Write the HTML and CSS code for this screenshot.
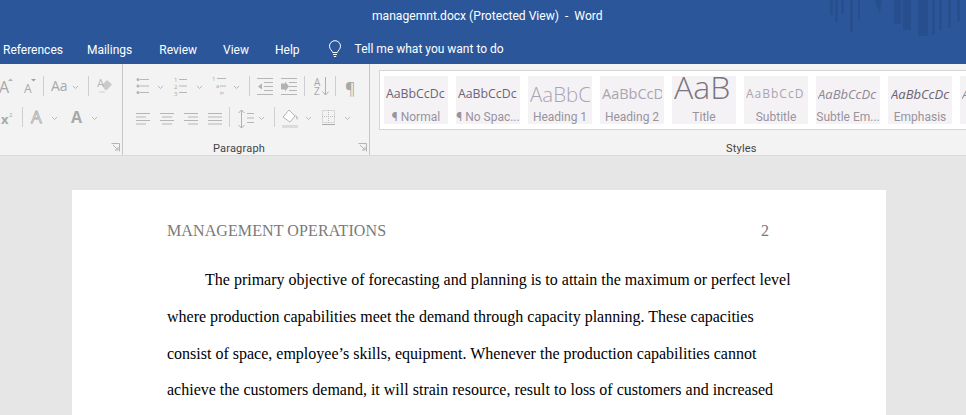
FILE: index.html
```html
<!DOCTYPE html>
<html lang="en">
<head>
<meta charset="utf-8">
<title>managemnt.docx (Protected View) - Word</title>
<link rel="stylesheet" href="styles.css">
</head>
<body>
<div class="app">
  <header class="chrome">
    <svg class="art" width="136" height="36" viewBox="0 0 136 36" aria-hidden="true">
      <g fill="#274f8d">
        <rect x="0" y="0" width="3" height="15"/><rect x="5" y="0" width="3" height="22"/><rect x="11" y="0" width="3" height="14"/><rect x="20" y="0" width="3" height="32"/><rect x="28" y="0" width="2" height="20"/>
        <polygon points="44,0 52,0 50,13"/>
        <rect x="64" y="0" width="7" height="24"/><rect x="73" y="0" width="8" height="30"/><rect x="88" y="0" width="10" height="36"/><rect x="102" y="0" width="3" height="35"/><rect x="109" y="0" width="3" height="30"/><rect x="118" y="0" width="3" height="28"/><rect x="127" y="0" width="3" height="22"/>
      </g>
    </svg>
    <div class="titlebar">managemnt.docx (Protected View)&nbsp; -&nbsp; Word</div>
    <nav class="tabs">
      <span class="tab tab-references">References</span>
      <span class="tab tab-mailings">Mailings</span>
      <span class="tab tab-review">Review</span>
      <span class="tab tab-view">View</span>
      <span class="tab tab-help">Help</span>
      <svg class="bulb" width="14" height="18" viewBox="0 0 14 18" aria-hidden="true">
        <path d="M4.600 12.500C4.400 10.600 1.500 9.400 1.500 6.200a5.500 5.500 0 0 1 11 0c0 3.200-2.900 4.400-3.100 6.300z" fill="none" stroke="#fff" stroke-width="1"/>
        <path d="M5 14.500h4M5.800 16.500h2.400" stroke="#fff" stroke-width="1"/>
      </svg>
      <span class="tell">Tell me what you want to do</span>
    </nav>
  </header>

  <section class="ribbon">
    <div class="group group-font">
      <svg class="tools" width="122" height="68" viewBox="0 0 122 68" aria-hidden="true">
        <g class="glyphs">
          <text x="-1" y="29" font-size="16">A</text>
          <path d="M8 17l2.500-2.500L13 17z" fill="#b4b4b4"/>
          <text x="24" y="29" font-size="12">A</text>
          <path d="M31 15h5l-2.500 2.500z" fill="#a0a0a0"/>
          <text x="51" y="27" font-size="14">Aa</text>
          <text x="1" y="60" font-size="13" font-weight="700">x</text>
          <text x="9" y="53" font-size="6">2</text>
          <text x="31" y="59" font-size="17" class="outline">A</text>
          <text x="71" y="59" font-size="16" font-weight="700">A</text>
        </g>
        <g class="seps"><path d="M43.500 12v20M88.500 12v20M22.500 43v20"/></g>
        <g class="chev"><path d="M73 22l2.500 2.500L78 22M52 53l2.500 2.500L57 53M92 53l2.500 2.500L97 53"/></g>
        <g>
          <path d="M102 21l5-5 5 4.500-5 5.500h-2z" fill="#cdc8cc"/>
          <text x="97" y="23" font-size="11" fill="#b8b8b8">A</text>
          <path d="M99 28h6" stroke="#d0d0d0"/>
        </g>
      </svg>
      <svg class="launcher" width="9" height="9" viewBox="0 0 9 9" aria-hidden="true"><path d="M.5.500h8v8M2 2l5 5M4 7h3V4" fill="none" stroke="#b4b4b4"/></svg>
    </div>

    <div class="group group-para">
      <svg class="tools" width="246" height="68" viewBox="0 0 246 68" aria-hidden="true">
        <g class="lines">
          <path d="M17 15.500h9M17 22h9M17 28.500h9"/>
          <path d="M56 15.500h8M56 22h8M56 28.500h8"/>
          <path d="M94 14.500h9M97 22h6M98 29h3"/>
          <path d="M13 49.500h14M13 53h10M13 56.500h14M13 60h10"/>
          <path d="M37 49.500h14M39 53h10M37 56.500h14M39 60h10"/>
          <path d="M61 49.500h14M65 53h10M61 56.500h14M65 60h10"/>
          <path d="M85 49.500h14M85 53h14M85 56.500h14M85 60h14"/>
          <path d="M124 49.500h7M124 54h7M124 58.500h7"/>
          <path d="M134 14.500h16M141 18.500h9M141 22.500h9M141 26.500h9M134 30.500h16"/>
          <path d="M158 14.500h16M166 18.500h8M166 22.500h8M166 26.500h8M158 30.500h16"/>
        </g>
        <g fill="#b3b3b3">
          <circle cx="15" cy="15.500" r="1.500"/><circle cx="15" cy="22" r="1.500"/><circle cx="15" cy="28.500" r="1.500"/>
          <path d="M135 22.500l4-3v6zM158 19.500h4v-2l4 5-4 5v-2h-4z"/>
        </g>
        <g class="minitext" font-size="6">
          <text x="51" y="18">1</text><text x="51" y="25">2</text><text x="51" y="32">3</text>
          <text x="89" y="17">1</text><text x="93" y="24">a</text><text x="97" y="31">i</text>
        </g>
        <g class="glyphs">
          <text x="191" y="22" font-size="10">A</text>
          <text x="191" y="31" font-size="10">Z</text>
          <text x="222" y="30" font-size="16">¶</text>
        </g>
        <path class="arrow" d="M202.500 13v18M199.500 27.500l3 3.500 3-3.500"/>
        <path class="arrow" d="M118.500 46v18M115.500 49l3-3 3 3M115.500 61l3 3 3-3"/>
        <g class="seps"><path d="M126.500 12v20M181.500 12v20M212.500 12v20M106.500 43v20M151.500 43v20"/></g>
        <g class="chev"><path d="M35 22l2.500 2.500L40 22M74 22l2.500 2.500L79 22M111 22l2.500 2.500L116 22M136 53l2.500 2.500L141 53M183 53l2.500 2.500L188 53M222 53l2.500 2.500L227 53"/></g>
        <path d="M160 53l6-7 6 6-5 6z" fill="#fff" stroke="#b4b4b4"/>
        <path d="M172 50l3 4-1 2z" fill="#b4b4b4"/>
        <rect x="159" y="61" width="16" height="3" fill="#dcdcdc"/>
        <rect x="199.500" y="46.500" width="12" height="12" fill="none" stroke="#bcbcbc" stroke-dasharray="1 1"/>
        <path d="M205.500 46v13M199 52.500h13" stroke="#bcbcbc" stroke-dasharray="1 1"/>
        <path d="M199 60.500h13" stroke="#aaa"/>
      </svg>
      <div class="group-label">Paragraph</div>
      <svg class="launcher" width="9" height="9" viewBox="0 0 9 9" aria-hidden="true"><path d="M.5.500h8v8M2 2l5 5M4 7h3V4" fill="none" stroke="#b4b4b4"/></svg>
    </div>

    <div class="group group-styles">
      <div class="gallery">
        <div class="tile"><span class="pv pv-normal">AaBbCcDc</span><span class="lb">¶ Normal</span></div>
        <div class="tile"><span class="pv pv-normal">AaBbCcDc</span><span class="lb">¶ No Spac...</span></div>
        <div class="tile"><span class="pv pv-h1">AaBbCc</span><span class="lb">Heading 1</span></div>
        <div class="tile"><span class="pv pv-h2">AaBbCcD</span><span class="lb">Heading 2</span></div>
        <div class="tile"><span class="pv pv-title">AaB</span><span class="lb">Title</span></div>
        <div class="tile"><span class="pv pv-sub">AaBbCcD</span><span class="lb">Subtitle</span></div>
        <div class="tile"><span class="pv pv-sem">AaBbCcDc</span><span class="lb">Subtle Em...</span></div>
        <div class="tile"><span class="pv pv-em">AaBbCcDc</span><span class="lb">Emphasis</span></div>
        <div class="tile"><span class="pv pv-sem">AaBbCcDc</span><span class="lb">Intense</span></div>
      </div>
      <div class="group-label">Styles</div>
    </div>
  </section>

  <main class="canvas">
    <article class="page">
      <div class="page-head"><span class="running">MANAGEMENT OPERATIONS</span><span>2</span></div>
      <p class="body">The primary objective of forecasting and planning is to attain the maximum or perfect level where production capabilities meet the demand through capacity planning. These capacities consist of space, employee’s skills, equipment. Whenever the production capabilities cannot achieve the customers demand, it will strain resource, result to loss of customers and increased</p>
    </article>
  </main>
</div>
</body>
</html>
```
FILE: styles.css
```css
* { box-sizing: border-box; }
html, body { margin: 0; height: 415px; overflow: hidden; }
body { font-family: Roboto, "Open Sans", sans-serif; }
.app { width: 966px; height: 415px; display: flex; flex-direction: column; overflow: hidden; }

.chrome { position: relative; height: 64px; background: #2b579a; color: #fff; flex: none; }
.art { position: absolute; top: 0; right: 0; }
.titlebar { height: 34px; padding: 8px 0 0 372px; font-size: 12.100px; line-height: 17px; white-space: nowrap; }
.tabs { display: flex; align-items: center; height: 30px; font-size: 12px; padding: 1px 0 0 3px; white-space: nowrap; }
.tab-mailings { margin-left: 24px; }
.tab-review { margin-left: 27px; }
.tab-view { margin-left: 26px; }
.tab-help { margin-left: 26px; }
.bulb { margin: -2px 0 0 28px; }
.tell { margin: -2px 0 0 13px; }

.ribbon { display: flex; height: 92px; flex: none; background: #f3f3f3; border-bottom: 1px solid #dadada; }
.group { position: relative; height: 91px; flex: none; }
.group-font { width: 123px; border-right: 1px solid #c6c6c6; }
.group-para { width: 247px; border-right: 1px solid #c6c6c6; }
.group-styles { flex: 1; padding: 6px 0 0 9px; min-width: 0; }
.tools { display: block; }
.launcher { position: absolute; right: 2px; bottom: 3px; }
.group-label { position: absolute; bottom: -1px; left: 0; right: 14px; text-align: center; font-size: 11px; line-height: 14px; color: #444; letter-spacing: .2px; }
.group-styles .group-label { right: 0; text-align: left; padding-left: 356px; }

.glyphs text { font-family: "Open Sans", sans-serif; fill: #a8a8a8; }
.glyphs .outline { fill: #f3f3f3; stroke: #b0b0b0; stroke-width: .8; }
.seps path { stroke: #cfcfcf; fill: none; }
.chev path { stroke: #b8b8b8; fill: none; }
.lines path { stroke: #b6b6b6; fill: none; }
.minitext text { fill: #aaa; font-family: "Open Sans", sans-serif; }
.arrow { stroke: #b0b0b0; fill: none; }

.gallery { display: flex; gap: 8px; height: 60px; padding: 5px 0 0 4px; background: #fff; border: 1px solid #d6d6d6; border-right: 0; overflow: hidden; }
.tile { width: 64px; height: 48px; flex: none; background: #f5f2f6; display: flex; flex-direction: column; align-items: flex-start; overflow: hidden; }
.pv { display: block; width: 60px; height: 33px; overflow: hidden; white-space: nowrap; color: #6a6570; line-height: 36px; font-family: "Open Sans", sans-serif; font-size: 12.300px; margin-left: 2px; flex: none; }
.pv-h1 { font-size: 20.500px; font-weight: 300; color: #a9a4ad; }
.pv-h2 { font-size: 14.500px; color: #aaa5ae; }
.pv-title { font-size: 32px; line-height: 21px; width: 57px; color: #7a757e; font-weight: 300; }
.pv-sub { font-size: 12px; letter-spacing: 1px; color: #a9a4ad; }
.pv-sem { font-size: 13px; font-style: italic; color: #8e8993; }
.pv-em { font-size: 13px; font-style: italic; color: #6a6570; margin-left: 3px; }
.lb { display: block; width: 64px; text-align: center; font-size: 12px; line-height: 17px; color: #98939c; white-space: nowrap; }

.canvas { flex: 1; background: #e6e6e6; padding: 34px 0 0 72px; overflow: hidden; min-height: 0; }
.page { width: 814px; height: 400px; background: #fff; padding: 29px 89px 0 95px; font-family: "Liberation Serif", "Times New Roman", serif; }
.page-head { display: flex; justify-content: space-between; padding-right: 28px; font-size: 16px; line-height: 24px; color: #7a7a7a; }
.running { letter-spacing: .1px; }
.body { margin: 19.400px 0 0; font-size: 16px; line-height: 36.600px; color: #000; text-indent: 38px; }
```
